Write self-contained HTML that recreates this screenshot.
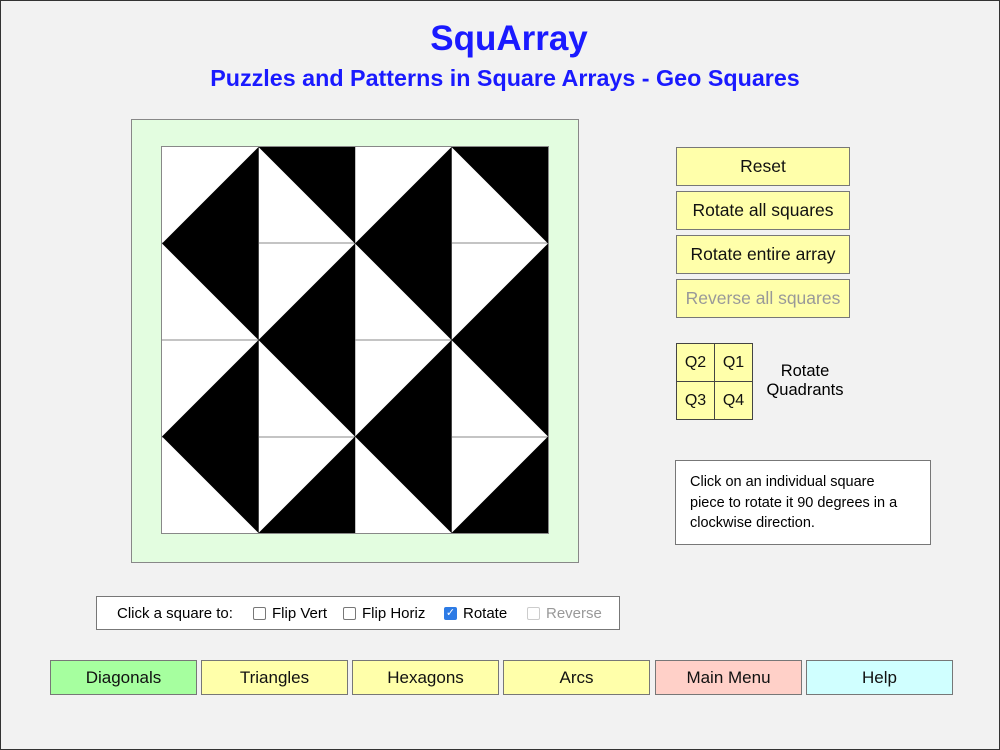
<!DOCTYPE html>
<html><head><style>
body{margin:0;width:1000px;height:750px;background:#f2f2f2;font-family:"Liberation Sans",Arial,sans-serif;position:relative;overflow:hidden}
.frame{position:absolute;left:0;top:0;width:998px;height:748px;border:1px solid #333}
.abs{position:absolute}
h1{position:absolute;left:0;width:1018px;top:19px;margin:0;text-align:center;color:#1a1aff;font-size:35px;font-weight:bold}
h2{position:absolute;left:0;width:1010px;top:65px;margin:0;text-align:center;color:#1a1aff;font-size:23.3px;font-weight:bold}
.btn{position:absolute;background:#ffffaa;border:1px solid #777;box-sizing:border-box;text-align:center;font-size:17px;color:#111}
.bb{top:660px;height:35px;width:147px;line-height:33px}
.rb{left:676px;width:174px;height:39px;line-height:37px;font-size:17.5px}
.q{width:39px;height:39px;line-height:37px;font-size:16px;border:1px solid #444}
.cb{position:absolute;top:10px;width:11px;height:11px;border:1px solid #777;border-radius:2px;background:#fff}
.lb{position:absolute;top:1px}
</style></head><body>
<div class="frame"></div>
<h1>SquArray</h1>
<h2>Puzzles and Patterns in Square Arrays - Geo Squares</h2>
<div class="abs" style="left:131px;top:119px;width:446px;height:442px;background:#e3fde0;border:1px solid #888"></div>
<svg class="abs" style="left:161px;top:146px" width="389" height="389" viewBox="0 0 389 389">
<rect x="1" y="1" width="386" height="386" fill="#fff"/>
<g stroke="#888" stroke-width="1" fill="none">
<line x1="97.5" y1="0" x2="97.5" y2="388"/><line x1="194" y1="0" x2="194" y2="388"/><line x1="290.5" y1="0" x2="290.5" y2="388"/>
<line x1="0" y1="97" x2="388" y2="97"/><line x1="0" y1="194" x2="388" y2="194"/><line x1="0" y1="291" x2="388" y2="291"/>
</g>
<g fill="#000">
<g id="rA">
<polygon points="97.5,1 97.5,97.5 1,97.5"/>
<polygon points="97.5,1 194,1 194,97.5"/>
<polygon points="290.5,1 290.5,97.5 194,97.5"/>
<polygon points="290.5,1 387,1 387,97.5"/>
</g>
<g id="rB" transform="translate(0,96.5)">
<polygon points="1,1 97.5,1 97.5,97.5"/>
<polygon points="194,1 194,97.5 97.5,97.5"/>
<polygon points="194,1 290.5,1 290.5,97.5"/>
<polygon points="387,1 387,97.5 290.5,97.5"/>
</g>
<use href="#rA" transform="translate(0,193)"/>
<use href="#rB" transform="translate(0,193)"/>
</g>
<rect x="0.5" y="0.5" width="387" height="387" stroke="#888" fill="none"/>
</svg>
<div class="btn rb" style="top:147px">Reset</div>
<div class="btn rb" style="top:191px">Rotate all squares</div>
<div class="btn rb" style="top:235px">Rotate entire array</div>
<div class="btn rb" style="top:279px;color:#999">Reverse all squares</div>
<div class="btn q" style="left:676px;top:343px">Q2</div>
<div class="btn q" style="left:714px;top:343px">Q1</div>
<div class="btn q" style="left:676px;top:381px">Q3</div>
<div class="btn q" style="left:714px;top:381px">Q4</div>
<div class="abs" style="left:760px;top:362px;width:90px;text-align:center;font-size:16.5px;line-height:19px">Rotate Quadrants</div>
<div class="abs" style="left:675px;top:460px;width:256px;height:85px;background:#fff;border:1px solid #777;box-sizing:border-box;padding:11px 20px 0 14px;font-size:14.5px;line-height:20.5px">Click on an individual square piece to rotate it 90 degrees in a clockwise direction.</div>
<div class="abs" style="left:96px;top:596px;width:524px;height:34px;background:#fff;border:1px solid #777;box-sizing:border-box;font-size:15px;line-height:32px;white-space:nowrap">
<span class="lb" style="left:20px">Click a square to:</span>
<span class="cb" style="left:156px"></span><span class="lb" style="left:175px">Flip Vert</span>
<span class="cb" style="left:246px"></span><span class="lb" style="left:265px">Flip Horiz</span>
<span class="cb" style="left:347px;width:13px;height:13px;border:none;background:#2d7be5;color:#fff;font-size:11px;line-height:13px;text-align:center">✓</span><span class="lb" style="left:366px">Rotate</span>
<span class="cb" style="left:430px;border-color:#ccc"></span><span class="lb" style="left:449px;color:#999">Reverse</span>
</div>
<div class="btn bb" style="left:50px;background:#a6ff9f">Diagonals</div>
<div class="btn bb" style="left:201px">Triangles</div>
<div class="btn bb" style="left:352px">Hexagons</div>
<div class="btn bb" style="left:503px">Arcs</div>
<div class="btn bb" style="left:655px;background:#ffd0c8">Main Menu</div>
<div class="btn bb" style="left:806px;background:#d0ffff">Help</div>
</body></html>
